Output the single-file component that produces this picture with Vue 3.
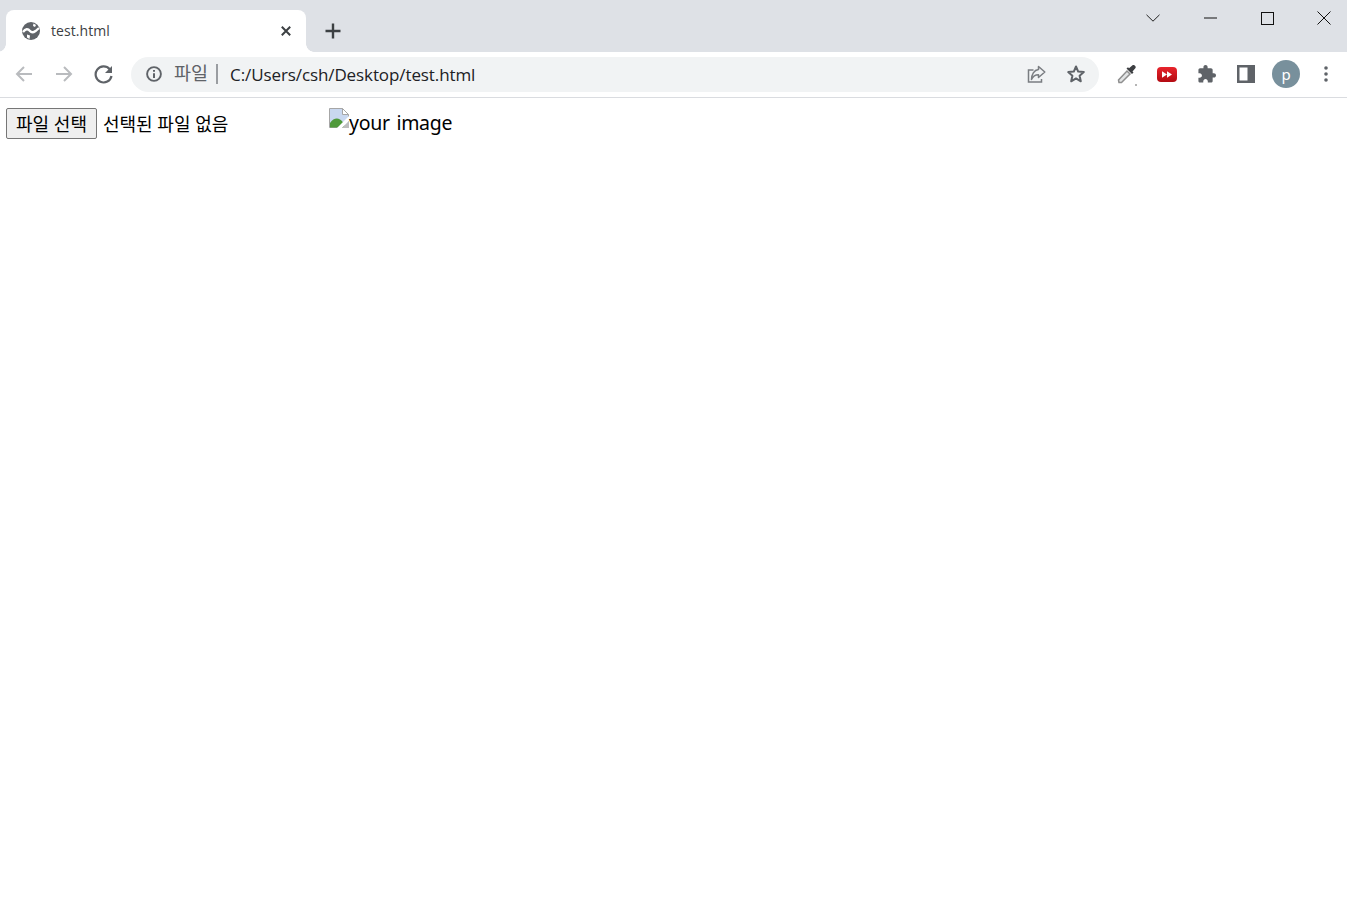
<script setup>
</script>

<template>
  <div class="browser">
    <header class="tabstrip">
      <div class="tab">
        <svg class="globe" width="18" height="18" viewBox="0 0 18 18"><circle cx="9" cy="9" r="9" fill="#5f6368"/><path d="M1 10C3.500 6.500 6 6.500 8 9c1.200 1.500 3.500 1.500 5.500 0L17 6" stroke="#fff" stroke-width="2.300" fill="none"/><path d="M5 12.500 8 13.500 7.500 17 5 15.500Z" fill="#fff"/><path d="M11.500 1.500 14 3 13 5 11 4Z" fill="#fff"/></svg>
        <span class="tab-title">test.html</span>
        <svg class="tab-close" width="10" height="10" viewBox="0 0 10 10"><path d="M.8.8l8.400 8.400M9.200.8.8 9.200" stroke="#3c4043" stroke-width="2" fill="none"/></svg>
      </div>
      <svg class="new-tab" width="16" height="16" viewBox="0 0 16 16"><path d="M8 .5v15M.5 8h15" stroke="#3c4043" stroke-width="2.400" fill="none"/></svg>
      <div class="window-controls">
        <button class="win-btn"><svg width="14" height="8" viewBox="0 0 14 8"><path d="M.5.8 7 7.200 13.500.8" stroke="#222" fill="none"/></svg></button>
        <button class="win-btn"><svg width="13" height="2" viewBox="0 0 13 2"><path d="M0 1h13" stroke="#111" stroke-width="1" fill="none"/></svg></button>
        <button class="win-btn"><svg width="13" height="13" viewBox="0 0 13 13"><rect x=".5" y=".5" width="12" height="12" stroke="#111" fill="none"/></svg></button>
        <button class="win-btn"><svg width="14" height="14" viewBox="0 0 14 14"><path d="M.5.500l13 13M13.500.5l-13 13" stroke="#111" fill="none"/></svg></button>
      </div>
    </header>

    <nav class="toolbar">
      <div class="nav-btns">
        <svg width="20" height="20" viewBox="0 0 20 20"><path d="M18 10H3M10 3 3 10l7 7" stroke="#b9bbbe" stroke-width="2" fill="none"/></svg>
        <svg width="20" height="20" viewBox="0 0 20 20"><path d="M2 10h15M10 3l7 7-7 7" stroke="#b9bbbe" stroke-width="2" fill="none"/></svg>
        <svg width="20" height="20" viewBox="0 0 20 20"><path d="M15.700 5.200A8 8 0 1 0 17.500 12" stroke="#5f6368" stroke-width="2.200" fill="none"/><path d="M18 2v7h-7z" fill="#5f6368"/></svg>
      </div>
      <div class="omnibox">
        <svg class="info" width="16" height="16" viewBox="0 0 16 16"><circle cx="8" cy="8" r="6.900" stroke="#5f6368" stroke-width="1.900" fill="none"/><path d="M8 7.200v4.800M8 4v1.800" stroke="#5f6368" stroke-width="2" fill="none"/></svg>
        <span class="scheme">파일</span>
        <span class="sep"></span>
        <span class="url">C:/Users/csh/Desktop/test.html</span>
        <svg class="share" width="20" height="20" viewBox="0 0 20 20"><path d="M7.500 6H2.500v12h13v-3" stroke="#7a7d81" stroke-width="1.500" fill="none"/><path d="M12.500 2.500 18.800 8l-6.300 5.500V10.700C9 10.700 7 12 5.500 15.500 5.500 10.500 8 6 12.500 5.500z" stroke="#7a7d81" stroke-width="1.500" fill="none" stroke-linejoin="round"/></svg>
        <svg class="star" width="20" height="20" viewBox="0 0 20 20"><path d="M10 2.500 12.200 7.600 17.800 8.100 13.600 11.800 14.800 17.300 10 14.400 5.200 17.300 6.400 11.800 2.200 8.100 7.800 7.600Z" stroke="#5f6368" stroke-width="2" fill="none" stroke-linejoin="round"/></svg>
      </div>
      <div class="extensions">
        <svg width="22" height="24" viewBox="0 0 22 24"><path d="M3 20.500 2.500 18 11 9l3 3-8.500 8.500z" fill="#e2e4e5" stroke="#8f8f8f" stroke-width="1.500"/><path d="M10.500 6.500l5.500 5.500 1.500-1.500-1-1 3-3.500c1-1.500-1.500-4-3-2.800l-3.500 3-1-1z" fill="#3d3f42"/><circle cx="20" cy="23" r=".7" fill="#333"/></svg>
        <svg class="yt" width="20" height="15" viewBox="0 0 20 15"><defs><linearGradient id="yt" x1="0" y1="0" x2="0" y2="1"><stop offset="0" stop-color="#e8242c"/><stop offset="1" stop-color="#b30b12"/></linearGradient></defs><rect width="20" height="15" rx="4" fill="url(#yt)"/><path d="M5 4.200 10 7.500l-5 3.300zM10 4.200 15 7.500l-5 3.300z" fill="#fff"/></svg>
        <svg width="18" height="18" viewBox="1.500 1 21.500 21.500"><path d="M20.500 11H19V7c0-1.100-.9-2-2-2h-4V3.500C13 2.120 11.880 1 10.500 1S8 2.120 8 3.500V5H4c-1.100 0-1.990.9-1.990 2v3.800H3.500c1.490 0 2.700 1.210 2.700 2.700s-1.210 2.700-2.700 2.700H2V20c0 1.100.9 2 2 2h3.800v-1.500c0-1.490 1.210-2.700 2.700-2.700 1.490 0 2.700 1.210 2.700 2.700V22H17c1.100 0 2-.9 2-2v-4h1.500c1.380 0 2.500-1.120 2.500-2.500S21.880 11 20.500 11z" fill="#5f6368"/></svg>
        <svg width="18" height="18" viewBox="0 0 18 18"><path d="M0 0h18v18H0zM2.500 2.500v13h8v-13z" fill="#5f6368" fill-rule="evenodd"/></svg>
        <div class="avatar">p</div>
        <svg width="4" height="16" viewBox="0 0 4 16"><circle cx="2" cy="2" r="1.800" fill="#5f6368"/><circle cx="2" cy="8" r="1.800" fill="#5f6368"/><circle cx="2" cy="14" r="1.800" fill="#5f6368"/></svg>
      </div>
    </nav>

    <main class="page">
      <button class="file-btn">파일 선택</button>
      <span class="file-status">선택된 파일 없음</span>
      <span class="broken">
        <svg width="20" height="20" viewBox="0 0 20 20">
          <path d="M.5.500h13l6 6v13H.5z" fill="#c9d8f0" stroke="#a6a6a6"/>
          <path d="M13.500.5v6h6z" fill="#fff" stroke="#a6a6a6"/>
          <path d="M1 19.500V15C4 10.500 8 9.500 11 11.500 13.500 13 15 15 16 19.500z" fill="#4f9a3a"/>
          <path d="M8 20 20 8v5l-7 7z" fill="#fff"/>
          <path d="M13 20 20 13v7z" fill="#bdbdbd"/>
        </svg>
        <span class="alt">your image</span>
      </span>
    </main>
  </div>
</template>

<style>
html, body { margin: 0; background: #fff; }
</style>

<style scoped>
.browser { display: flex; flex-direction: column; min-height: 909px; font-family: "Noto Sans", "Noto Sans CJK KR", sans-serif; }
.tabstrip { height: 52px; background: #dee1e6; display: flex; align-items: flex-end; padding-left: 6px; position: relative; }
.tab { width: 300px; height: 42px; box-sizing: border-box; background: #fff; border-radius: 8px 8px 0 0; display: flex; align-items: center; padding: 0 15px 0 16px; position: relative; }
.tab::before, .tab::after { content: ""; position: absolute; bottom: 0; width: 8px; height: 8px; background: radial-gradient(circle at 0 0, transparent 7.500px, #fff 8px); }
.tab::before { left: -8px; }
.tab::after { right: -8px; transform: scaleX(-1); }
.globe { flex: none; }
.tab-title { flex: 1; margin-left: 11px; font-size: 14px; letter-spacing: 0.08px; line-height: 18px; margin-top: -1px; color: #3c4043; font-family: "Open Sans", sans-serif; }
.new-tab { margin: 0 0 13px 19px; }
.window-controls { position: absolute; top: 0; right: 0; display: flex; align-items: flex-start; }
.win-btn { width: 57px; height: 36px; border: 0; padding: 0; background: none; display: flex; align-items: center; justify-content: center; }
.win-btn:last-child { width: 51.500px; justify-content: flex-start; padding-left: 21.500px; }
.toolbar { height: 46px; box-sizing: border-box; border-bottom: 1px solid #dadce0; background: #fff; display: flex; align-items: center; padding-bottom: 1px; }
.nav-btns { display: flex; gap: 20px; margin-left: 14px; width: 117px; }
.omnibox { width: 968px; height: 35px; background: #f1f3f4; border-radius: 18px; display: flex; align-items: center; padding: 0 13px 0 15px; box-sizing: border-box; }
.scheme { margin-left: 12px; font-size: 18.500px; color: #5f6368; line-height: 20px; position: relative; top: -1px; }
.sep { width: 2px; height: 20px; background: #9a9da1; margin: 0 12px 0 8px; }
.url { flex: 1; font-size: 17px; letter-spacing: -0.1px; color: #202124; font-family: "Open Sans", sans-serif; }
.share { margin-right: 20px; }
.extensions { display: flex; align-items: center; margin-left: 17px; gap: 0; }
.extensions > svg:nth-child(1) { margin-right: 19px; }
.extensions > svg:nth-child(2) { margin-right: 21px; }
.extensions > svg:nth-child(3) { margin-right: 21px; }
.extensions > svg:nth-child(4) { margin-right: 17px; }
.avatar { width: 28px; height: 28px; border-radius: 50%; background: #78909c; color: #fff; display: flex; align-items: center; justify-content: center; font-size: 15px; margin-right: 24px; }
.page { display: flex; align-items: center; padding: 10px 6px 0; font-size: 18px; color: #000; }
.file-btn { width: 91px; height: 31px; padding: 0 0 2px; box-sizing: border-box; background: #efefef; border: 1px solid #767676; border-radius: 2px; font: inherit; font-size: 18px; color: #000; }
.file-status { margin-left: 6px; width: 226px; white-space: nowrap; position: relative; top: -1px; }
.broken { display: inline-flex; align-items: flex-start; height: 31px; }
.broken svg { flex: none; }
.alt { font-size: 19.500px; line-height: 30px; letter-spacing: -0.3px; word-spacing: 2px; font-family: "Noto Sans", sans-serif; }
</style>
